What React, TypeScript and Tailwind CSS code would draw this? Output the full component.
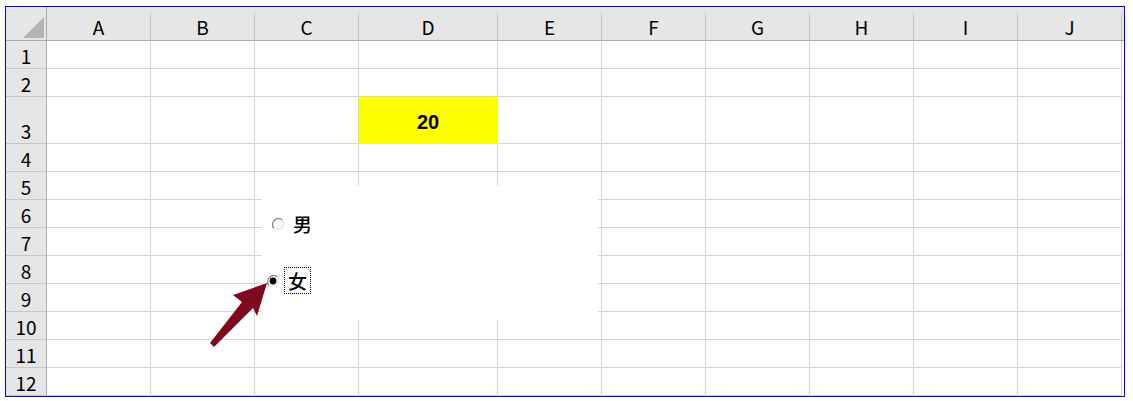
import React from 'react';

const cols = [
  { name: 'A', w: 'w-[104px]' },
  { name: 'B', w: 'w-[104px]' },
  { name: 'C', w: 'w-[104px]' },
  { name: 'D', w: 'w-[139px]' },
  { name: 'E', w: 'w-[104px]' },
  { name: 'F', w: 'w-[104px]' },
  { name: 'G', w: 'w-[104px]' },
  { name: 'H', w: 'w-[104px]' },
  { name: 'I', w: 'w-[104px]' },
  { name: 'J', w: 'w-[104px]' },
];

const rows = [1, 2, 3, 4, 5, 6, 7, 8, 9, 10, 11, 12];

const font = { fontFamily: '"Noto Sans CJK SC", "Noto Sans", sans-serif' };

const Radio: React.FC<{ checked?: boolean }> = ({ checked }) => (
  <svg width="14" height="14" viewBox="0 0 14 14" className="shrink-0">
    <circle cx="7" cy="7" r="6" fill="#fff" />
    <path d="M 11.2 2.8 A 6 6 0 0 0 2.8 11.2" stroke="#7a7a7a" strokeWidth="1.3" fill="none" />
    <path d="M 2.8 11.2 A 6 6 0 0 0 11.2 2.8" stroke="#dcdcdc" strokeWidth="1.3" fill="none" />
    {checked && <circle cx="7" cy="7" r="3.4" fill="#000" />}
  </svg>
);

export default function App() {
  return (
    <div className="w-[1133px] h-[401px] bg-white overflow-hidden pt-[6px] pl-[5px]">
      <div className="relative w-[1120px] border border-[#0000ff] bg-white text-black" style={font}>
        {/* header row */}
        <div className="flex h-[34px] bg-[#e6e6e6] border-b border-[#ababab]">
          <div className="w-[41px] shrink-0 border-r border-[#ababab] flex items-end justify-end pr-[2px] pb-[2px]">
            <svg width="21" height="21" viewBox="0 0 21 21">
              <polygon points="21,0 21,21 0,21" fill="#b4b4b4" />
            </svg>
          </div>
          {cols.map(c => (
            <div key={c.name} className={`${c.w} shrink-0 flex`}>
              <div className="flex-1 text-center text-[19px] leading-none pt-[10px]">{c.name}</div>
              <div className="w-px h-[27px] self-end bg-[#c2c2c2]" />
            </div>
          ))}
        </div>

        {/* body rows */}
        {rows.map(r => (
          <div key={r} className={`flex ${r === 3 ? 'h-[47px]' : 'h-[28px]'}`}>
            <div className="w-[41px] shrink-0 bg-[#e6e6e6] border-r border-r-[#ababab] border-b border-b-[#c6c6c6] flex items-end justify-center pb-[3px] text-[19px] leading-none">
              {r}
            </div>
            {cols.map(c => {
              const yellow = r === 3 && c.name === 'D';
              return (
                <div
                  key={c.name}
                  className={`${c.w} shrink-0 border-r border-b ${
                    yellow ? 'bg-[#ffff00] border-[#ffff00]' : 'border-[#d4d4d4]'
                  } flex items-center justify-center`}
                >
                  {yellow && (
                    <span
                      className="text-[20px] leading-none font-bold pt-[3px]"
                      style={{ fontFamily: '"Liberation Sans", Arial, sans-serif' }}
                    >
                      20
                    </span>
                  )}
                </div>
              );
            })}
          </div>
        ))}

        {/* option button group */}
        <div className="absolute left-[256px] top-[179px] w-[336px] h-[134px] bg-white flex flex-col">
          <div className="mt-[30px] h-[15px] ml-[9px] flex items-center gap-[8px]">
            <Radio />
            <span className="text-[19px] leading-none font-medium">男</span>
          </div>
          <div className="mt-[36px] h-[27px] ml-[4px] flex items-center gap-[4px]">
            <Radio checked />
            <span className="h-[27px] border border-dotted border-black px-[3px] flex items-center text-[19px] leading-none font-medium">
              女
            </span>
          </div>
        </div>

        {/* arrow */}
        <svg className="absolute left-[199px] top-[271px]" width="65" height="72" viewBox="0 0 65 72">
          <polygon points="62,5 28,17 37,24 5,65 9,69 48,30 52,38" fill="#7f0a1e" />
        </svg>
      </div>
    </div>
  );
}
